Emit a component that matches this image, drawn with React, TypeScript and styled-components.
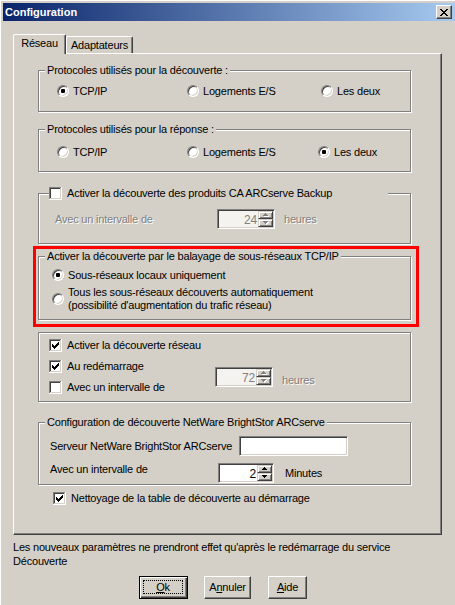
import React from "react";
import styled, { createGlobalStyle, css } from "styled-components";

const FACE = "#d4d0c8";
const GRAY = "#808080";
const DARK = "#404040";

const GlobalStyle = createGlobalStyle`
  *, *::before, *::after { box-sizing: border-box; }
  html, body { margin: 0; padding: 0; background: ${FACE}; }
  body {
    font-family: "Liberation Sans", Arial, sans-serif;
    font-size: 11px;
    line-height: 13px;
    letter-spacing: -0.2px;
    color: #000;
  }
`;

const Window = styled.div`
  width: 455px;
  height: 605px;
  overflow: hidden;
  background: ${FACE};
  box-shadow: inset 1px 1px 0 #fff;
  display: flex;
  flex-direction: column;
`;

const TitleBar = styled.div`
  margin: 3px 0 0 3px;
  height: 18px;
  padding: 0 3px 0 2px;
  display: flex;
  align-items: center;
  justify-content: space-between;
  background: linear-gradient(to right, #0a246a, #a6caf0);
  color: #fff;
  font-weight: bold;
  letter-spacing: 0;
`;

const CloseBtn = styled.div`
  width: 16px;
  height: 14px;
  background: ${FACE};
  border: 1px solid;
  border-color: #fff ${DARK} ${DARK} #fff;
  box-shadow: inset -1px -1px 0 ${GRAY};
  display: flex;
  align-items: center;
  justify-content: center;
`;

const Body = styled.div`
  padding: 13px 0 0 13px;
  display: flex;
  flex-direction: column;
`;

const TabStrip = styled.div`
  display: flex;
  align-items: flex-end;
  height: 19px;
`;

const Tab = styled.div<{ $active?: boolean; $w: number }>`
  width: ${(p) => p.$w}px;
  height: ${(p) => (p.$active ? 20 : 17)}px;
  margin-bottom: ${(p) => (p.$active ? -1 : 0)}px;
  position: relative;
  z-index: ${(p) => (p.$active ? 1 : 0)};
  background: ${FACE};
  border-left: 1px solid #fff;
  border-top: 1px solid #fff;
  border-right: 1px solid ${DARK};
  box-shadow: inset -1px 0 0 ${GRAY};
  border-radius: 2px 2px 0 0;
  padding-top: 2px;
  text-align: center;
`;

const Panel = styled.div`
  width: 429px;
  height: 482px;
  border-left: 1px solid #fff;
  border-top: 1px solid #fff;
  border-right: 1px solid ${DARK};
  border-bottom: 1px solid ${DARK};
  box-shadow: inset -1px -1px 0 ${GRAY};
  padding-left: 24px;
  display: flex;
  flex-direction: column;
  align-items: flex-start;
`;

const Group = styled.fieldset<{ $mt: number }>`
  margin: ${(p) => p.$mt}px 0 0 0;
  padding: 0;
  min-width: 0;
  width: 373px;
  border: 1px solid ${GRAY};
  box-shadow: inset 1px 1px 0 #fff, 1px 1px 0 #fff;
`;

const Legend = styled.legend<{ $ml?: number; $w?: number }>`
  margin-left: ${(p) => p.$ml ?? 6}px;
  padding: 0 ${(p) => (p.$w ? 0 : 2)}px;
  ${(p) => p.$w && css`width: ${p.$w}px;`}
  height: 13px;
  line-height: 13px;
  background: ${FACE};
`;

const GroupBody = styled.div<{ $pad: string }>`
  padding: ${(p) => p.$pad};
  display: flex;
  flex-direction: column;
  align-items: flex-start;
`;

const RedFrame = styled.div`
  margin: 2px 0 0 -5px;
  width: 386px;
  border: 3px solid #ff0000;
  padding: 1px 5px 4px 2px;
`;

const OptionRow = styled.div<{ $cols: string }>`
  display: grid;
  grid-template-columns: ${(p) => p.$cols};
  height: 14px;
  align-items: center;
`;

const Option = styled.label<{ $h?: number; $mt?: number }>`
  display: flex;
  align-items: center;
  gap: 4px;
  height: ${(p) => p.$h ?? 14}px;
  margin-top: ${(p) => p.$mt ?? 0}px;
  white-space: nowrap;
`;

const Radio = styled.span<{ $on?: boolean }>`
  flex: none;
  width: 12px;
  height: 12px;
  border-radius: 50%;
  background: #fff;
  border: 1px solid;
  border-color: ${GRAY} #fff #fff ${GRAY};
  box-shadow: inset 1px 1px 0 ${DARK}, inset -1px -1px 0 ${FACE};
  display: flex;
  align-items: center;
  justify-content: center;
  &::after {
    content: "";
    width: 4px;
    height: 4px;
    border-radius: 1px;
    background: #000;
    display: ${(p) => (p.$on ? "block" : "none")};
  }
`;

const CheckLine = styled.label<{ $h?: number; $ml?: number; $mt?: number }>`
  display: flex;
  align-items: center;
  gap: 5px;
  height: ${(p) => p.$h ?? 13}px;
  margin: ${(p) => p.$mt ?? 0}px 0 0 ${(p) => p.$ml ?? 0}px;
  white-space: nowrap;
`;

const BoxSvg = styled.svg`
  flex: none;
  display: block;
`;

const CHECK =
  "M3 5h1v3H3zM4 6h1v3H4zM5 7h1v3H5zM6 6h1v3H6zM7 5h1v3H7zM8 4h1v3H8zM9 3h1v3H9z";

function CheckBox({ on }: { on?: boolean }) {
  return (
    <BoxSvg width="13" height="13" viewBox="0 0 13 13" shapeRendering="crispEdges">
      <path d="M0 0h12v1H1v11H0z" fill={GRAY} />
      <path d="M12 0h1v13H0v-1h12z" fill="#fff" />
      <path d="M1 1h10v1H2v9H1z" fill={DARK} />
      <path d="M11 1h1v11H1v-1h10z" fill={FACE} />
      <rect x="2" y="2" width="9" height="9" fill="#fff" />
      {on && <path d={CHECK} fill="#000" />}
    </BoxSvg>
  );
}

const FieldRow = styled.div<{ $mt?: number }>`
  display: flex;
  align-items: center;
  height: 20px;
  margin-top: ${(p) => p.$mt ?? 0}px;
`;

const FieldLabel = styled.span<{ $w: number; $disabled?: boolean; $top?: boolean }>`
  width: ${(p) => p.$w}px;
  white-space: nowrap;
  ${(p) => p.$top && css`align-self: flex-start;`}
  ${(p) =>
    p.$disabled &&
    css`
      color: ${GRAY};
      text-shadow: 1px 1px 0 #fff;
    `}
`;

const Unit = styled.span<{ $ml: number; $disabled?: boolean; $dy?: number }>`
  margin-left: ${(p) => p.$ml}px;
  position: relative;
  top: ${(p) => p.$dy ?? 0}px;
  ${(p) =>
    p.$disabled &&
    css`
      color: ${GRAY};
      text-shadow: 1px 1px 0 #fff;
    `}
`;

const Sunken = css`
  border: 1px solid;
  border-color: ${GRAY} #fff #fff ${GRAY};
  box-shadow: inset 1px 1px 0 ${DARK}, inset -1px -1px 0 ${FACE};
`;

const TextBox = styled.div<{ $w: number }>`
  width: ${(p) => p.$w}px;
  height: 20px;
  background: #fff;
  ${Sunken}
`;

const SpinFrame = styled.div<{ $w: number; $disabled?: boolean }>`
  width: ${(p) => p.$w}px;
  height: 20px;
  flex: none;
  display: flex;
  padding: 1px;
  background: ${(p) => (p.$disabled ? "#f4f3f0" : "#fff")};
  ${Sunken}
`;

const SpinValue = styled.span<{ $disabled?: boolean }>`
  flex: 1;
  text-align: right;
  line-height: 16px;
  padding: 1px 1px 0 0;
  font-size: 12px;
  color: ${(p) => (p.$disabled ? GRAY : "#000")};
`;

const SpinArrows = styled.div`
  width: 15px;
  display: flex;
  flex-direction: column;
`;

const ArrowBtn = styled.div`
  flex: 1;
  background: ${FACE};
  border: 1px solid;
  border-color: ${FACE} ${DARK} ${DARK} ${FACE};
  box-shadow: inset 1px 1px 0 #fff, inset -1px -1px 0 ${GRAY};
  display: flex;
  align-items: center;
  justify-content: center;
`;

function Arrow({ down, disabled }: { down?: boolean; disabled?: boolean }) {
  const d = down ? "M0 0h5v1H0zM1 1h3v1H1zM2 2h1v1H2z" : "M2 0h1v1H2zM1 1h3v1H1zM0 2h5v1H0z";
  return (
    <svg width="6" height="4" viewBox="0 0 6 4" shapeRendering="crispEdges">
      {disabled && <path d={d} fill="#fff" transform="translate(1 1)" />}
      <path d={d} fill={disabled ? GRAY : "#000"} />
    </svg>
  );
}

function Spin({ w, value, disabled }: { w: number; value: string; disabled?: boolean }) {
  return (
    <SpinFrame $w={w} $disabled={disabled}>
      <SpinValue $disabled={disabled}>{value}</SpinValue>
      <SpinArrows>
        <ArrowBtn>
          <Arrow disabled={disabled} />
        </ArrowBtn>
        <ArrowBtn>
          <Arrow down disabled={disabled} />
        </ArrowBtn>
      </SpinArrows>
    </SpinFrame>
  );
}

const RestartGrid = styled.div`
  display: grid;
  grid-template-columns: 166px auto;
  grid-template-rows: repeat(3, 21px);
  align-items: center;
  & > label {
    grid-column: 1;
  }
`;

const SpinCell = styled.div`
  grid-column: 2;
  grid-row: 2 / 4;
  display: flex;
  align-items: center;
`;

const Note = styled.p`
  margin: 5px 0 0 0;
  width: 410px;
  line-height: 14px;
`;

const ButtonRow = styled.div`
  display: flex;
  margin: 8px 0 0 126px;
`;

const Btn = styled.div<{ $default?: boolean; $w: number; $ml?: number }>`
  width: ${(p) => p.$w}px;
  height: 23px;
  margin-left: ${(p) => p.$ml ?? 0}px;
  background: ${FACE};
  border: 1px solid;
  border-color: #fff ${DARK} ${DARK} #fff;
  box-shadow: inset -1px -1px 0 ${GRAY};
  display: flex;
  align-items: center;
  justify-content: center;
  ${(p) =>
    p.$default &&
    css`
      border-color: #000;
      box-shadow: inset 1px 1px 0 #fff, inset -1px -1px 0 ${DARK}, inset -2px -2px 0 ${GRAY};
      padding: 3px 4px 4px 3px;
    `}
`;

const Focus = styled.span`
  flex: 1;
  align-self: stretch;
  border: 1px dotted #000;
  display: flex;
  align-items: center;
  justify-content: center;
`;

export default function App() {
  return (
    <>
      <GlobalStyle />
      <Window>
        <TitleBar>
          <span>Configuration</span>
          <CloseBtn>
            <svg width="8" height="7" viewBox="0 0 8 7" shapeRendering="crispEdges">
              <path
                d="M0 0h2v1H0zM6 0h2v1H6zM1 1h2v1H1zM5 1h2v1H5zM2 2h4v1H2zM3 3h2v1H3zM2 4h4v1H2zM1 5h2v1H1zM5 5h2v1H5zM0 6h2v1H0zM6 6h2v1H6z"
                fill="#000"
              />
            </svg>
          </CloseBtn>
        </TitleBar>

        <Body>
          <TabStrip>
            <Tab $active $w={53}>Réseau</Tab>
            <Tab $w={67}>Adaptateurs</Tab>
          </TabStrip>

          <Panel>
            <Group $mt={10}>
              <Legend>Protocoles utilisés pour la découverte :</Legend>
              <GroupBody $pad="7px 0 13px 18px">
                <OptionRow $cols="130px 134px auto">
                  <Option><Radio $on />TCP/IP</Option>
                  <Option><Radio />Logements E/S</Option>
                  <Option><Radio />Les deux</Option>
                </OptionRow>
              </GroupBody>
            </Group>

            <Group $mt={11}>
              <Legend>Protocoles utilisés pour la réponse :</Legend>
              <GroupBody $pad="9px 0 12px 18px">
                <OptionRow $cols="130px 131px auto">
                  <Option><Radio />TCP/IP</Option>
                  <Option><Radio />Logements E/S</Option>
                  <Option><Radio $on />Les deux</Option>
                </OptionRow>
              </GroupBody>
            </Group>

            <Group $mt={15}>
              <Legend $ml={10} $w={339}>
                <CheckLine>
                  <CheckBox />
                  Activer la découverte des produits CA ARCserve Backup
                </CheckLine>
              </Legend>
              <GroupBody $pad="9px 0 14px 16px">
                <FieldRow>
                  <FieldLabel $w={162} $disabled>Avec un intervalle de</FieldLabel>
                  <Spin w={58} value="24" disabled />
                  <Unit $ml={9} $disabled>heures</Unit>
                </FieldRow>
              </GroupBody>
            </Group>

            <RedFrame>
              <Group $mt={0}>
                <Legend>Activer la découverte par le balayage de sous-réseaux TCP/IP</Legend>
                <GroupBody $pad="5px 0 7px 13px">
                  <Option><Radio $on />Sous-réseaux locaux uniquement</Option>
                  <Option $h={26} $mt={4}>
                    <Radio />
                    <span>
                      Tous les sous-réseaux découverts automatiquement
                      <br />
                      (possibilité d'augmentation du trafic réseau)
                    </span>
                  </Option>
                </GroupBody>
              </Group>
            </RedFrame>

            <Group $mt={5}>
              <GroupBody $pad="2px 0 3px 10px">
                <RestartGrid>
                  <CheckLine><CheckBox on />Activer la découverte réseau</CheckLine>
                  <CheckLine><CheckBox on />Au redémarrage</CheckLine>
                  <CheckLine><CheckBox />Avec un intervalle de</CheckLine>
                  <SpinCell>
                    <Spin w={58} value="72" disabled />
                    <Unit $ml={9} $dy={3} $disabled>heures</Unit>
                  </SpinCell>
                </RestartGrid>
              </GroupBody>
            </Group>

            <Group $mt={14}>
              <Legend>Configuration de découverte NetWare BrightStor ARCserve</Legend>
              <GroupBody $pad="7px 0 1px 11px">
                <FieldRow>
                  <FieldLabel $w={189}>Serveur NetWare BrightStor ARCserve</FieldLabel>
                  <TextBox $w={109} />
                </FieldRow>
                <FieldRow $mt={7}>
                  <FieldLabel $w={168} $top>Avec un intervalle de</FieldLabel>
                  <Spin w={56} value="2" />
                  <Unit $ml={11}>Minutes</Unit>
                </FieldRow>
              </GroupBody>
            </Group>

            <CheckLine $ml={15} $mt={7}>
              <CheckBox on />
              Nettoyage de la table de découverte au démarrage
            </CheckLine>
          </Panel>

          <Note>
            Les nouveaux paramètres ne prendront effet qu'après le redémarrage du service Découverte
          </Note>

          <ButtonRow>
            <Btn $default $w={49}>
              <Focus>
                <u>O</u>k
              </Focus>
            </Btn>
            <Btn $w={47} $ml={16}>
              A<u>n</u>nuler
            </Btn>
            <Btn $w={39} $ml={17}>
              <u>A</u>ide
            </Btn>
          </ButtonRow>
        </Body>
      </Window>
    </>
  );
}
